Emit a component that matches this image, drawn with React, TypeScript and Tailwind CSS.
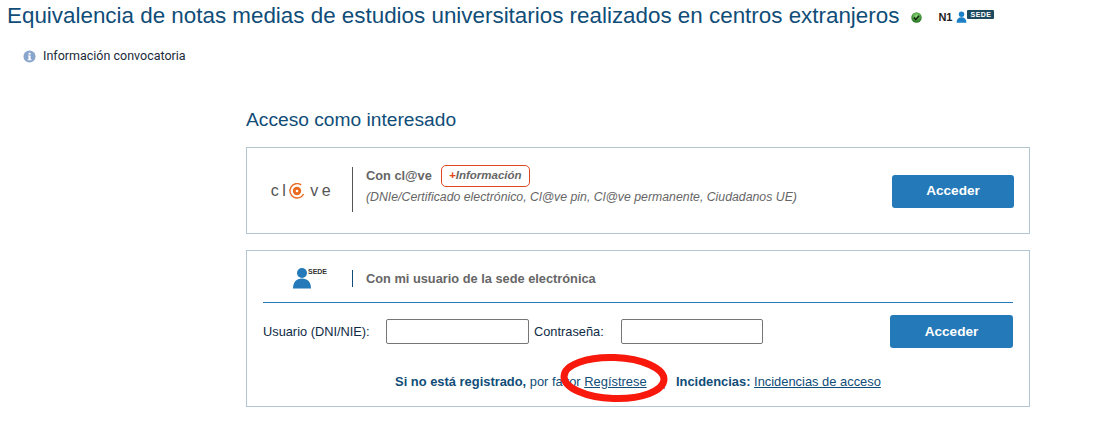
const font = "font-['Liberation_Sans',Arial,sans-serif]";

function ClaveLogo() {
  return (
    <div className="flex items-center text-[#555] text-[16px] leading-none font-['Liberation_Sans',Arial,sans-serif]">
      <span className="tracking-[3.5px]">cl</span>
      <svg width="18" height="18" viewBox="0 0 18 18" className="-ml-[1px] mr-[4px]">
        <path d="M13.2 2.9A7.2 7.2 0 1 0 15.6 12" fill="none" stroke="#ea6a1f" strokeWidth="1.4" />
        <circle cx="9" cy="9" r="4.2" fill="#ea6a1f" />
        <circle cx="9" cy="9" r="1.3" fill="#fff" />
      </svg>
      <span className="tracking-[3.5px]">ve</span>
    </div>
  );
}

function SedeUser() {
  return (
    <svg width="20" height="22" viewBox="0 0 20 22">
      <circle cx="10" cy="6" r="5" fill="#2479b8" />
      <path d="M1 21.5C1 15 4.5 11.5 10 11.5S19 15 19 21.5Z" fill="#2479b8" />
    </svg>
  );
}

export default function App() {
  return (
    <div className={`${font} relative w-[1110px] h-[430px] overflow-hidden bg-white text-[#0f2b46]`}>
      <header className="flex items-center h-[31px] pl-[7px]">
        <h1 className="text-[22.4px] leading-[31px] text-[#104d78] whitespace-nowrap">
          Equivalencia de notas medias de estudios universitarios realizados en centros extranjeros
        </h1>
        <svg width="11" height="11" viewBox="0 0 12 12" className="ml-[12px] mt-[3px]">
          <defs>
            <radialGradient id="okGlow" cx="50%" cy="35%" r="65%">
              <stop offset="0%" stopColor="#8fd97a" />
              <stop offset="100%" stopColor="#1f6f1c" />
            </radialGradient>
          </defs>
          <circle cx="6" cy="6" r="5.7" fill="url(#okGlow)" />
          <path d="M3.2 6 5.2 8.2 8.8 4.2" fill="none" stroke="#10290e" strokeWidth="1.7" />
        </svg>
        <span className="ml-[16px] mt-[3px] text-[11px] font-bold text-[#222]">N1</span>
        <svg width="11" height="12" viewBox="0 0 20 22" className="ml-[4px] mt-[2px]">
          <circle cx="10" cy="6" r="5" fill="#1a7fc4" />
          <path d="M1 21.5C1 15 4.5 11.5 10 11.5S19 15 19 21.5Z" fill="#1a7fc4" />
        </svg>
        <span className="mb-[2px] h-[9px] w-[27px] rounded-[1px] bg-[#1d4a5f] text-white text-[7px] leading-[9px] font-bold text-center tracking-[0.4px]">
          SEDE
        </span>
      </header>

      <div className="flex items-center h-[18px] mt-[16px] pl-[23px] gap-[7px]">
        <svg width="13" height="13" viewBox="0 0 14 14">
          <circle cx="7" cy="7" r="6.5" fill="#8aa5cc" />
          <path d="M5.4 6H8.2V10H9.2V11H5V10H6V7H5.4Z" fill="#fff" />
          <rect x="6" y="3" width="2.2" height="2" fill="#fff" />
        </svg>
        <span className="text-[12.5px] font-['Roboto',sans-serif] text-[#1b2b3a]">Información convocatoria</span>
      </div>

      <main className="ml-[246px] w-[784px] mt-[42px]">
        <h2 className="text-[19.2px] leading-[24px] pt-[1px] -mb-[1px] text-[#104d78]">Acceso como interesado</h2>

        <section className="mt-[16px] flex items-center h-[87px] border border-[#b5c6d3] pr-[15px]">
          <div className="w-[105px] flex justify-center pl-[6px]">
            <ClaveLogo />
          </div>
          <div className="h-[45px] -mt-[2px] w-px bg-[#555]" />
          <div className="ml-[13px] flex-1 -mt-[9px]">
            <div className="flex items-center gap-[9px]">
              <span className="-mt-[1px] text-[12.8px] font-bold text-[#666]">Con cl@ve</span>
              <span className="h-[22px] w-[89px] rounded-[5px] border border-[#e2461c] text-[11.5px] leading-[18px] font-bold italic text-[#666] text-center">
                <span className="text-[#e2461c]">+</span>Información
              </span>
            </div>
            <p className="mt-[1px] text-[12.3px] italic text-[#666]">
              (DNIe/Certificado electrónico, Cl@ve pin, Cl@ve permanente, Ciudadanos UE)
            </p>
          </div>
          <button className="w-[122px] h-[33px] mt-[1px] pt-[1px] rounded-[3px] bg-[#2479b8] text-white text-[13.6px] font-bold">
            Acceder
          </button>
        </section>

        <section className="mt-[16px] h-[157px] border border-[#b5c6d3] px-[16px]">
          <div className="flex items-center h-[52px] border-b border-[#2479b8]">
            <div className="w-[89px] flex justify-center items-start pl-[4px] mt-[3px]">
              <SedeUser />
              <span className="-ml-[4px] text-[7px] leading-[9px] font-bold text-[#333]">SEDE</span>
            </div>
            <div className="h-[17px] w-px bg-[#104d78] mt-[3px]" />
            <span className="ml-[13px] mt-[4px] text-[12.8px] font-bold text-[#666]">
              Con mi usuario de la sede electrónica
            </span>
          </div>

          <div className="flex items-center mt-[12px] text-[12.8px] text-[#0f2b46]">
            <label className="w-[123px]">Usuario (DNI/NIE):</label>
            <input className="w-[143px] h-[25px] border border-[#767676] rounded-[2px]" />
            <label className="ml-[5px] w-[87px]">Contraseña:</label>
            <input className="w-[142px] h-[25px] border border-[#767676] rounded-[2px]" />
            <button className="ml-[127px] w-[123px] h-[33px] pt-[1px] rounded-[3px] bg-[#2479b8] text-white text-[13.6px] font-bold">
              Acceder
            </button>
          </div>

          <p className="mt-[24px] text-center text-[12.9px] text-[#104d78] whitespace-pre">
            <b>Si no está registrado,</b> por favor <a className="underline">Regístrese</a>
            <span className="ml-[16px] text-[#777]">|</span>
            <b className="ml-[10px]">Incidencias:</b> <a className="underline">Incidencias de acceso</a>
          </p>
        </section>
      </main>

      <svg width="120" height="60" viewBox="0 0 120 60" className="absolute left-[554px] top-[348px]">
        <ellipse cx="60" cy="30" rx="50" ry="20.5" fill="none" stroke="#f8180c" strokeWidth="7" transform="rotate(2 60 30)" />
      </svg>
    </div>
  );
}
